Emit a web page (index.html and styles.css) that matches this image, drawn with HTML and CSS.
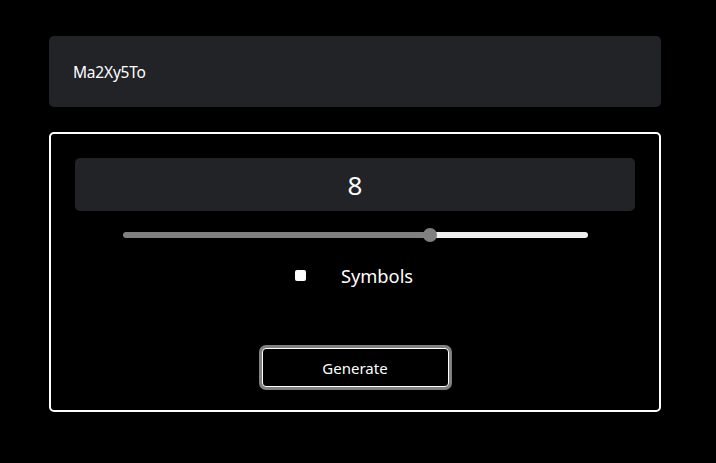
FILE: index.html
```html
<!DOCTYPE html>
<html>
<head>
<meta charset="utf-8">
<link rel="stylesheet" href="styles.css">
</head>
<body>
<div class="app">
  <div class="output">Ma2Xy5To</div>
  <div class="card">
    <div class="length">8</div>
    <div class="slider-row">
      <input class="slider" type="range" min="0" max="12" value="8">
    </div>
    <label class="option">
      <span class="check"></span>
      <span class="option-label">Symbols</span>
    </label>
    <div class="actions">
      <button class="generate">Generate</button>
    </div>
  </div>
</div>
</body>
</html>
```
FILE: styles.css
```css
* { box-sizing: border-box; }
html, body { margin: 0; background: #000; }
body {
  font-family: "Noto Sans", "Open Sans", sans-serif;
  color: #fff;
  width: 716px;
  height: 463px;
  overflow: hidden;
}
.app {
  padding: 36px 55px 0 49px;
  display: flex;
  flex-direction: column;
  gap: 25px;
}
.output {
  height: 71px;
  background: #212327;
  border-radius: 5px;
  display: flex;
  align-items: center;
  padding-left: 24px;
  font-size: 15.5px;
  letter-spacing: -0.2px;
}
.card {
  height: 280px;
  border: 2px solid #fff;
  border-radius: 5px;
  padding: 24px 24px 0 24px;
  display: flex;
  flex-direction: column;
}
.length {
  height: 53px;
  background: #212327;
  border-radius: 5px;
  display: flex;
  align-items: center;
  justify-content: center;
  font-size: 26px;
}
.slider-row {
  margin-top: 17px;
  height: 14px;
  display: flex;
  justify-content: center;
}
.slider {
  -webkit-appearance: none;
  appearance: none;
  margin: 0;
  width: 465px;
  height: 14px;
  background: transparent;
}
.slider::-webkit-slider-runnable-track {
  height: 6px;
  border-radius: 3px;
  background: linear-gradient(to right, #808080 0, #808080 66%, #efefef 66%, #efefef 100%);
}
.slider::-webkit-slider-thumb {
  -webkit-appearance: none;
  width: 14px;
  height: 14px;
  border-radius: 50%;
  background: #808080;
  margin-top: -4px;
}
.option {
  margin-top: 19px;
  height: 28px;
  display: flex;
  align-items: center;
  justify-content: center;
  gap: 35px;
  margin-left: -2px;
  font-size: 18.3px;
}
.check {
  width: 11px;
  height: 11px;
  background: #fff;
  border-radius: 2px;
}
.actions {
  margin-top: 59px;
  display: flex;
  justify-content: center;
}
.generate {
  width: 187px;
  height: 39px;
  background: #000;
  color: #fff;
  border: 1px solid #fff;
  border-radius: 4px;
  box-shadow: 0 0 0 3px #808080;
  font-family: "Noto Sans", "Open Sans", sans-serif;
  font-size: 15px;
  cursor: pointer;
}
```
